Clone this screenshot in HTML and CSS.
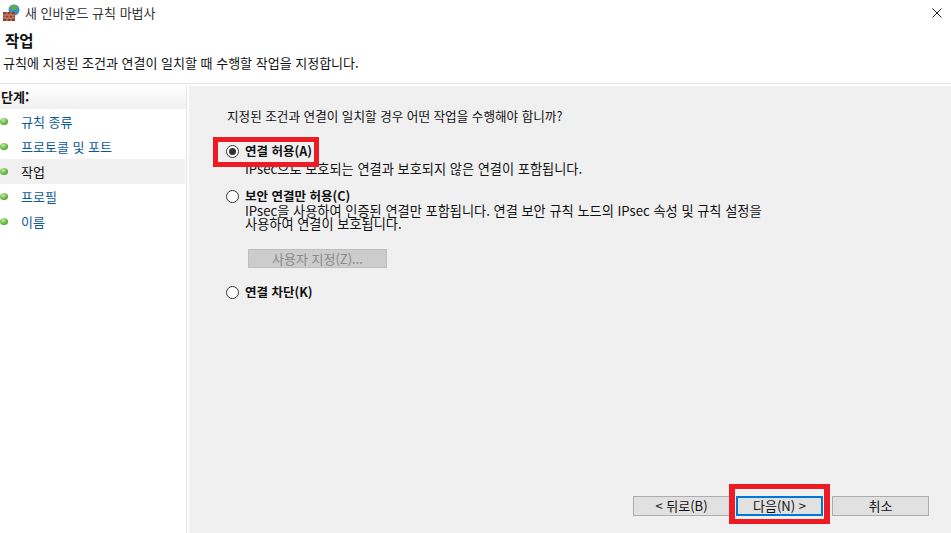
FILE: index.html
```html
<!DOCTYPE html>
<html lang="ko">
<head>
    <meta charset="UTF-8">
    <meta name="viewport" content="width=device-width, initial-scale=1.0">
    <title>새 인바운드 규칙 마법사</title>
    <link rel="stylesheet" href="styles.css">
</head>
<body>
    <div class="titlebar">
        <svg class="app-icon" width="18" height="17" viewBox="0 0 18 17">
            <circle cx="11" cy="6" r="5.5" fill="#3f8fc4"/>
            <path d="M8 1.500c2-1.500 5-1 6 1s-1 3.500-3 3.500-4-2.500-3-4.500z" fill="#5fae4a"/>
            <rect x="0" y="8" width="12" height="9" fill="#8f3f2c"/>
            <path d="M0 11h12M0 14h12M4 8v3M8 8v3M2 11v3M6 11v3M10 11v3M4 14v3M8 14v3" stroke="#c98f78" stroke-width="1" fill="none"/>
        </svg>
        <span class="title-text">새 인바운드 규칙 마법사</span>
        <svg class="close-x" width="10" height="10" viewBox="0 0 10 10">
            <path d="M0.500 0.500l9 9M9.500 0.500l-9 9" stroke="#222" stroke-width="1" fill="none"/>
        </svg>
    </div>

    <header class="page-head">
        <h1>작업</h1>
        <p>규칙에 지정된 조건과 연결이 일치할 때 수행할 작업을 지정합니다.</p>
    </header>

    <div class="wizard">
        <nav class="steps">
            <div class="steps-title">단계:</div>
            <ul>
                <li class="step"><i class="dot"></i>규칙 종류</li>
                <li class="step"><i class="dot"></i>프로토콜 및 포트</li>
                <li class="step current"><i class="dot"></i>작업</li>
                <li class="step"><i class="dot"></i>프로필</li>
                <li class="step"><i class="dot"></i>이름</li>
            </ul>
        </nav>

        <main class="content">
            <p class="question">지정된 조건과 연결이 일치할 경우 어떤 작업을 수행해야 합니까?</p>

            <div class="option first">
                <span class="radio checked"></span>
                <div class="option-body">
                    <div class="option-label">연결 허용(A)</div>
                    <div class="option-desc">IPsec으로 보호되는 연결과 보호되지 않은 연결이 포함됩니다.</div>
                </div>
                <div class="mark mark-allow"></div>
            </div>

            <div class="option second">
                <span class="radio"></span>
                <div class="option-body">
                    <div class="option-label">보안 연결만 허용(C)</div>
                    <div class="option-desc">IPsec을 사용하여 인증된 연결만 포함됩니다. 연결 보안 규칙 노드의 IPsec 속성 및 규칙 설정을<br>사용하여 연결이 보호됩니다.</div>
                    <div class="btn custom">사용자 지정(Z)...</div>
                </div>
            </div>

            <div class="option third">
                <span class="radio"></span>
                <div class="option-body">
                    <div class="option-label">연결 차단(K)</div>
                </div>
            </div>

            <div class="buttons">
                <div class="btn">&lt; 뒤로(B)</div>
                <div class="btn default">다음(N) &gt;<div class="mark mark-next"></div></div>
                <div class="btn">취소</div>
            </div>
        </main>
    </div>
</body>
</html>
```

FILE: styles.css
```css
html, body {
    height: 100%;
}

body {
    margin: 0;
    width: 951px;
    height: 533px;
    overflow: hidden;
    display: flex;
    flex-direction: column;
    background: #fff;
    color: #111;
    font-family: "Noto Sans CJK KR", "Noto Sans", sans-serif;
    font-size: 13px;
}

.titlebar {
    height: 25px;
    display: flex;
    align-items: center;
    padding: 0 9px 0 3px;
    flex-shrink: 0;
}

.app-icon {
    margin-right: 4px;
}

.title-text {
    flex: 1;
    color: #333;
}

.page-head {
    height: 59px;
    padding-left: 5px;
    box-sizing: border-box;
    border-bottom: 1px solid #e4e4e4;
    flex-shrink: 0;
}

.page-head h1 {
    margin: 5px 0 0;
    font-size: 15.500px;
    line-height: 20px;
    font-weight: bold;
}

.page-head p {
    margin: 4px 0 0 -2px;
    line-height: 18px;
}

.wizard {
    flex: 1;
    display: flex;
    margin-top: 2px;
}

.steps {
    width: 186px;
    border-right: 1px solid #e6e6e6;
    flex-shrink: 0;
}

.steps-title {
    height: 23px;
    line-height: 22px;
    padding-left: 1px;
    font-weight: bold;
    background: linear-gradient(#fff, #f0f0f0);
}

.steps ul {
    margin: 0;
    padding: 0;
    list-style: none;
}

.step {
    height: 25px;
    line-height: 24px;
    display: flex;
    align-items: center;
    color: #0b5a9c;
}

.step.current {
    color: #111;
    background: #f0f0f0;
    margin-right: 1px;
}

.dot {
    width: 8px;
    height: 7px;
    margin-right: 13px;
    border-radius: 50%;
    background: radial-gradient(circle at 40% 30%, #c4eaa0, #4eaa2c 70%);
}

.content {
    flex: 1;
    margin-left: 2px;
    background: #f0f0f0;
    position: relative;
    padding: 21px 0 0 38px;
    display: flex;
    flex-direction: column;
}

.question {
    margin: 0;
    line-height: 18px;
    font-size: 12.600px;
}

.option {
    display: flex;
    position: relative;
}

.first {
    margin-top: 18px;
}

.second {
    margin-top: 13px;
}

.third {
    margin-top: 16px;
}

.first .option-desc {
    margin-top: 3px;
}

.radio {
    width: 11px;
    height: 11px;
    margin: 2px 6px 0 -1px;
    border: 1px solid #333;
    border-radius: 50%;
    background: #fff;
    position: relative;
    flex-shrink: 0;
}

.radio.checked::after {
    content: "";
    position: absolute;
    left: 2px;
    top: 2px;
    width: 7px;
    height: 7px;
    border-radius: 50%;
    background: #333;
}

.option-label {
    font-weight: bold;
    line-height: 16px;
    font-size: 12.500px;
}

.option-desc {
    line-height: 13px;
    font-size: 13.200px;
}

.btn {
    box-sizing: border-box;
    background: #e1e1e1;
    border: 1px solid #adadad;
    text-align: center;
    position: relative;
}

.custom {
    width: 139px;
    height: 19px;
    line-height: 17px;
    margin: 19px 0 0 3px;
    background: #ccc;
    border-color: #bfbfbf;
    color: #8a8a8a;
}

.buttons {
    margin-top: auto;
    margin-bottom: 17px;
    margin-right: 22px;
    display: flex;
    justify-content: flex-end;
    gap: 9px;
}

.buttons .btn {
    width: 97px;
    height: 20px;
    line-height: 18px;
}

.buttons .btn.default {
    width: 87px;
    margin-left: -3px;
    border: 2px solid #0078d7;
    line-height: 16px;
}

/* 스크린샷에 표시된 빨간 강조 상자 */
.mark {
    position: absolute;
    border: 5px solid #ed1c24;
    box-sizing: border-box;
    pointer-events: none;
}

.mark-allow {
    left: -14px;
    top: -6px;
    width: 106px;
    height: 30px;
}

.mark-next {
    left: -9px;
    top: -14px;
    width: 101px;
    height: 40px;
    border-width: 5px 6px;
}
```
